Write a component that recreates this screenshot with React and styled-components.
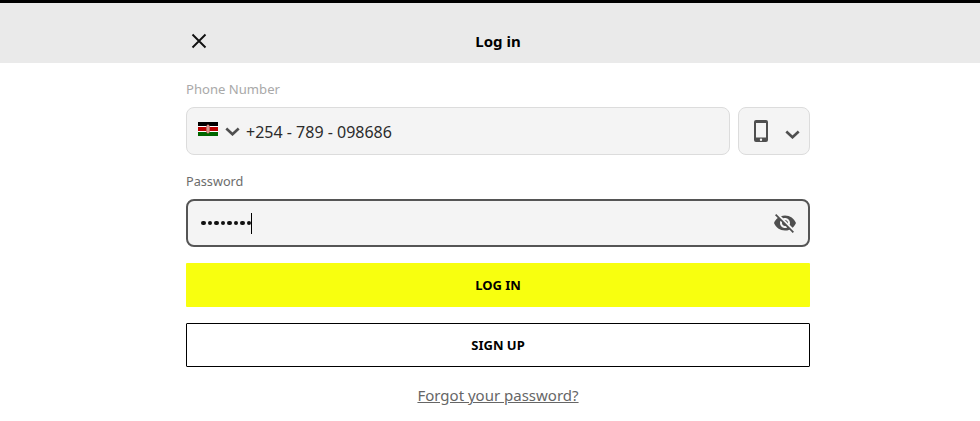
import React from "react";
import styled, { createGlobalStyle } from "styled-components";

const Global = createGlobalStyle`
  html, body { margin: 0; padding: 0; background: #fff; }
  body { font-family: "Noto Sans", "Open Sans", sans-serif; }
`;
const Page = styled.div`
  width: 980px; height: 421px; overflow: hidden; background: #fff;
  border-top: 3px solid #000; box-sizing: border-box;
`;
const Header = styled.header`
  height: 60px; background: #eaeaea; padding: 28px 0 0 186px; box-sizing: border-box;
`;
const HeaderInner = styled.div`
  width: 624px; height: 20px;
  display: grid; grid-template-columns: 1fr auto 1fr; align-items: center;
`;
const Close = styled.button`
  border: 0; background: none; padding: 0 0 0 5px; width: 30px; height: 20px; display: flex; align-items: center; cursor: pointer;
`;
const Title = styled.h1`
  margin: 0; font-size: 15px; line-height: 20px; font-weight: 700; color: #000;
`;
const Form = styled.form`
  width: 624px; margin: 0 0 0 186px; display: flex; flex-direction: column;
`;
const Label = styled.label`
  display: block; font-size: ${p => p.$muted ? "13.1px" : "12.7px"}; line-height: 18px; color: ${p => p.$muted ? "#a9a9a9" : "#6c6c6c"};
  padding-top: 1px; margin-top: ${p => p.$top}px; margin-bottom: 9px;
`;
const Row = styled.div`display: flex; gap: 8px;`;
const Field = styled.div`
  flex: ${p => p.$active ? "none" : "1"}; height: 48px; box-sizing: border-box; background: #f4f4f4;
  border: ${p => p.$active ? "2px solid #555" : "1px solid #dcdcdc"};
  border-radius: 8px; display: flex; align-items: center;
  padding: ${p => p.$active ? "0 12px" : "0 11px"};
`;
const Chevron = styled.svg`display: block; flex: none; margin-top: ${p => p.$drop}px;`;
const FlagBox = styled.span`display: block; margin: -5px 7px 0 0; flex: none;`;
const PhoneText = styled.span`font-size: 16px; color: #2b2b2b; margin-left: 6px; padding-top: 1px; white-space: pre;`;
const Device = styled.div`
  width: 72px; height: 48px; box-sizing: border-box; background: #f4f4f4; border: 1px solid #dcdcdc;
  border-radius: 8px; display: flex; align-items: center; padding-left: 15px; gap: 17px;
`;
const Dots = styled.span`
  display: flex; gap: 2px; align-items: center; margin-left: 1px;
`;
const Dot = styled.i`width: 4.5px; height: 4.5px; border-radius: 50%; background: #111; display: block;`;
const Caret = styled.span`width: 1px; height: 21px; background: #000;`;
const Eye = styled.span`margin-left: auto; display: flex; margin-right: -1px;`;
const Btn = styled.button`
  width: 100%; height: 44px; box-sizing: border-box; font: 700 13px "Noto Sans", sans-serif; color: #000;
  border-radius: 1px; cursor: pointer; margin-top: 16px; padding: 0;
  background: ${p => p.$primary ? "#f8ff0f" : "#fff"};
  border: ${p => p.$primary ? "0" : "1px solid #000"};
`;
const Forgot = styled.a`
  align-self: center; margin-top: 18px; font-size: 15px; line-height: 20px; color: #666; text-decoration: underline;
`;

const Flag = () => (
  <svg width="20" height="14" viewBox="0 0 20 14" style={{ display: "block" }}>
    <rect width="20" height="4" fill="#000" />
    <rect y="4" width="20" height="1" fill="#fff" />
    <rect y="5" width="20" height="4" fill="#bb0000" />
    <rect y="9" width="20" height="1" fill="#fff" />
    <rect y="10" width="20" height="4" fill="#006600" />
    <ellipse cx="10" cy="7" rx="2" ry="4.5" fill="#c9635a" />
    <rect x="9.5" y="3" width="1" height="8" fill="#eee" opacity=".7" />
  </svg>
);
const Down = ({ drop = 0 }) => (
  <Chevron $drop={drop} width={15} height={9} viewBox="0 0 15 9">
    <path d="M1.3 1.5 7.5 7.3 13.7 1.5" fill="none" stroke="#4f4f4f" strokeWidth={2.6} />
  </Chevron>
);

export default function App() {
  return (
    <Page>
      <Global />
      <Header>
        <HeaderInner>
          <Close type="button" aria-label="Close">
            <svg width="16" height="16" viewBox="0 0 16 16">
              <path d="M1.5 1.5 14.5 14.5M14.5 1.5 1.5 14.5" stroke="#111" strokeWidth="1.9" fill="none" />
            </svg>
          </Close>
          <Title>Log in</Title>
        </HeaderInner>
      </Header>
      <Form>
        <Label $muted $top={16}>Phone Number</Label>
        <Row>
          <Field>
            <FlagBox><Flag /></FlagBox>
            <Down />
            <PhoneText>+254 - 789 - 098686</PhoneText>
          </Field>
          <Device>
            <svg width="14" height="22" viewBox="1 1 14 22">
              <path fillRule="evenodd" fill="#4f4f4f" d="M3 1h10a2 2 0 0 1 2 2v18a2 2 0 0 1-2 2H3a2 2 0 0 1-2-2V3a2 2 0 0 1 2-2Zm0 3v14.5h10V4H3Zm5 15.6a1.2 1.2 0 1 0 0 2.4 1.2 1.2 0 0 0 0-2.4Z" />
            </svg>
            <Down drop={6} />
          </Device>
        </Row>
        <Label $top={16}>Password</Label>
        <Field $active>
          <Dots>
            {Array.from({ length: 8 }, (_, i) => <Dot key={i} />)}
          </Dots>
          <Caret />
          <Eye>
            <svg width="24" height="24" viewBox="0 0 24 24">
              <path fill="#4f4f4f" d="M12 7c2.76 0 5 2.24 5 5 0 .65-.13 1.26-.36 1.83l2.92 2.92c1.51-1.26 2.7-2.89 3.43-4.75-1.73-4.39-6-7.5-11-7.5-1.4 0-2.74.25-3.98.7l2.16 2.16C10.74 7.13 11.35 7 12 7zM2 4.27l2.28 2.28.46.46C3.08 8.3 1.78 10.02 1 12c1.73 4.39 6 7.5 11 7.5 1.55 0 3.03-.3 4.38-.84l.42.42L19.73 22 21 20.73 3.27 3 2 4.27zM7.53 9.8l1.55 1.55c-.05.21-.08.43-.08.65 0 1.66 1.34 3 3 3 .22 0 .44-.03.65-.08l1.55 1.55c-.67.33-1.41.53-2.2.53-2.76 0-5-2.24-5-5 0-.79.2-1.53.53-2.2zm4.31-.78 3.15 3.15.02-.16c0-1.66-1.34-3-3-3l-.17.01z" />
            </svg>
          </Eye>
        </Field>
        <Btn type="button" $primary>LOG IN</Btn>
        <Btn type="button">SIGN UP</Btn>
        <Forgot href="#">Forgot your password?</Forgot>
      </Form>
    </Page>
  );
}
